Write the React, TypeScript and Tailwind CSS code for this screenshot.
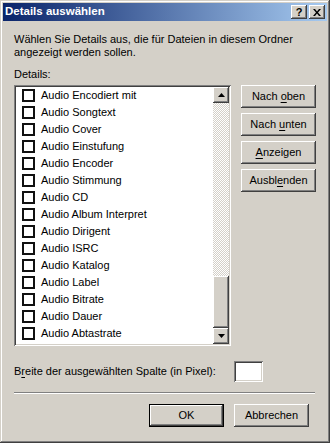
import React from 'react';

const FONT = { fontFamily: '"Liberation Sans", Arial, sans-serif' };

const items = [
  'Audio Encodiert mit',
  'Audio Songtext',
  'Audio Cover',
  'Audio Einstufung',
  'Audio Encoder',
  'Audio Stimmung',
  'Audio CD',
  'Audio Album Interpret',
  'Audio Dirigent',
  'Audio ISRC',
  'Audio Katalog',
  'Audio Label',
  'Audio Bitrate',
  'Audio Dauer',
  'Audio Abtastrate',
];

// classic raised bevel
const raised =
  'bg-[#d4d0c8] shadow-[inset_-1px_-1px_#404040,inset_1px_1px_#ffffff,inset_-2px_-2px_#808080,inset_2px_2px_#d4d0c8]';
const sunken =
  'shadow-[inset_1px_1px_#808080,inset_-1px_-1px_#ffffff,inset_2px_2px_#404040,inset_-2px_-2px_#d4d0c8]';

function Button({ children, isDefault }: { children: React.ReactNode; isDefault?: boolean }) {
  if (isDefault) {
    return (
      <div className="w-[75px] h-[23px] border border-black">
        <div className={`w-full h-full flex items-center justify-center text-[11px] text-black ${raised}`}>
          <span>{children}</span>
        </div>
      </div>
    );
  }
  return (
    <div className={`w-[75px] h-[23px] flex items-center justify-center text-[11px] text-black ${raised}`}>
      <span>{children}</span>
    </div>
  );
}

function U({ children }: { children: React.ReactNode }) {
  return <span className="underline underline-offset-[2px]">{children}</span>;
}

function Arrow({ up }: { up?: boolean }) {
  return (
    <div className={`w-[16px] h-[16px] flex items-center justify-center ${raised}`}>
      <svg width="7" height="4" viewBox="0 0 7 4">
        {up ? <polygon points="3.5,0 7,4 0,4" fill="#000" /> : <polygon points="0,0 7,0 3.5,4" fill="#000" />}
      </svg>
    </div>
  );
}

export default function App() {
  return (
    <div
      style={FONT}
      className="w-[330px] h-[443px] bg-[#d4d0c8] p-[3px] shadow-[inset_-1px_-1px_#404040,inset_1px_1px_#d4d0c8,inset_-2px_-2px_#808080,inset_2px_2px_#ffffff] flex flex-col text-[11px] text-black"
    >
      {/* title bar */}
      <div className="h-[18px] flex items-center pl-[2px] pr-[2px] bg-[linear-gradient(to_right,#0a246a,#a6caf0)]">
        <span className="flex-1 text-white font-bold text-[11.5px] leading-none">Details auswählen</span>
        <div className={`w-[16px] h-[14px] flex items-center justify-center font-bold text-[11px] leading-none ${raised}`}>?</div>
        <div className={`ml-[2px] w-[16px] h-[14px] flex items-center justify-center ${raised}`}>
          <svg width="8" height="7" viewBox="0 0 8 7">
            <path d="M0 0h2l2 2.5L6 0h2L5 3.5 8 7H6L4 4.5 2 7H0l3-3.5z" fill="#000" />
          </svg>
        </div>
      </div>

      <div className="flex-1 flex flex-col px-[11px] pt-[12px]">
        <div className="leading-[13px]">
          Wählen Sie Details aus, die für Dateien in diesem Ordner
          <br />
          angezeigt werden sollen.
        </div>
        <div className="mt-[9px] leading-[13px]">Details:</div>

        <div className="flex mt-[4px]">
          {/* list */}
          <div className={`w-[218px] h-[261px] bg-white p-[2px] flex ${sunken}`}>
            <div className="flex-1 flex flex-col">
              {items.map((t) => (
                <div key={t} className="h-[17px] flex items-center pl-[6px] shrink-0">
                  <div className="w-[13px] h-[13px] bg-white shrink-0 border-2 border-[#111]" />
                  <span className="ml-[6px] whitespace-nowrap">{t}</span>
                </div>
              ))}
            </div>
            <div className="w-[16px] flex flex-col">
              <Arrow up />
              <div className="flex-1 bg-[repeating-conic-gradient(#d4d0c8_0_25%,#ffffff_0_50%)] bg-[length:2px_2px]" />
              <div className={`h-[52px] ${raised}`} />
              <Arrow />
            </div>
          </div>

          {/* right buttons */}
          <div className="ml-[10px] flex flex-col gap-[5px]">
            <Button>
              Nach <U>o</U>ben
            </Button>
            <Button>
              Nach <U>u</U>nten
            </Button>
            <Button>
              <U>A</U>nzeigen
            </Button>
            <Button>
              Ausbl<U>e</U>nden
            </Button>
          </div>
        </div>

        <div className="flex items-center mt-[15px]">
          <span className="w-[220px]">
            B<U>r</U>eite der ausgewählten Spalte (in Pixel):
          </span>
          <div className={`w-[29px] h-[21px] bg-white ${sunken}`} />
        </div>

        <div className="mt-[10px] w-[301px] h-[2px] border-t border-[#808080] border-b border-b-white" />

        <div className="flex justify-end gap-[10px] mt-[10px] pr-[7px]">
          <Button isDefault>OK</Button>
          <Button>Abbrechen</Button>
        </div>
      </div>
    </div>
  );
}
